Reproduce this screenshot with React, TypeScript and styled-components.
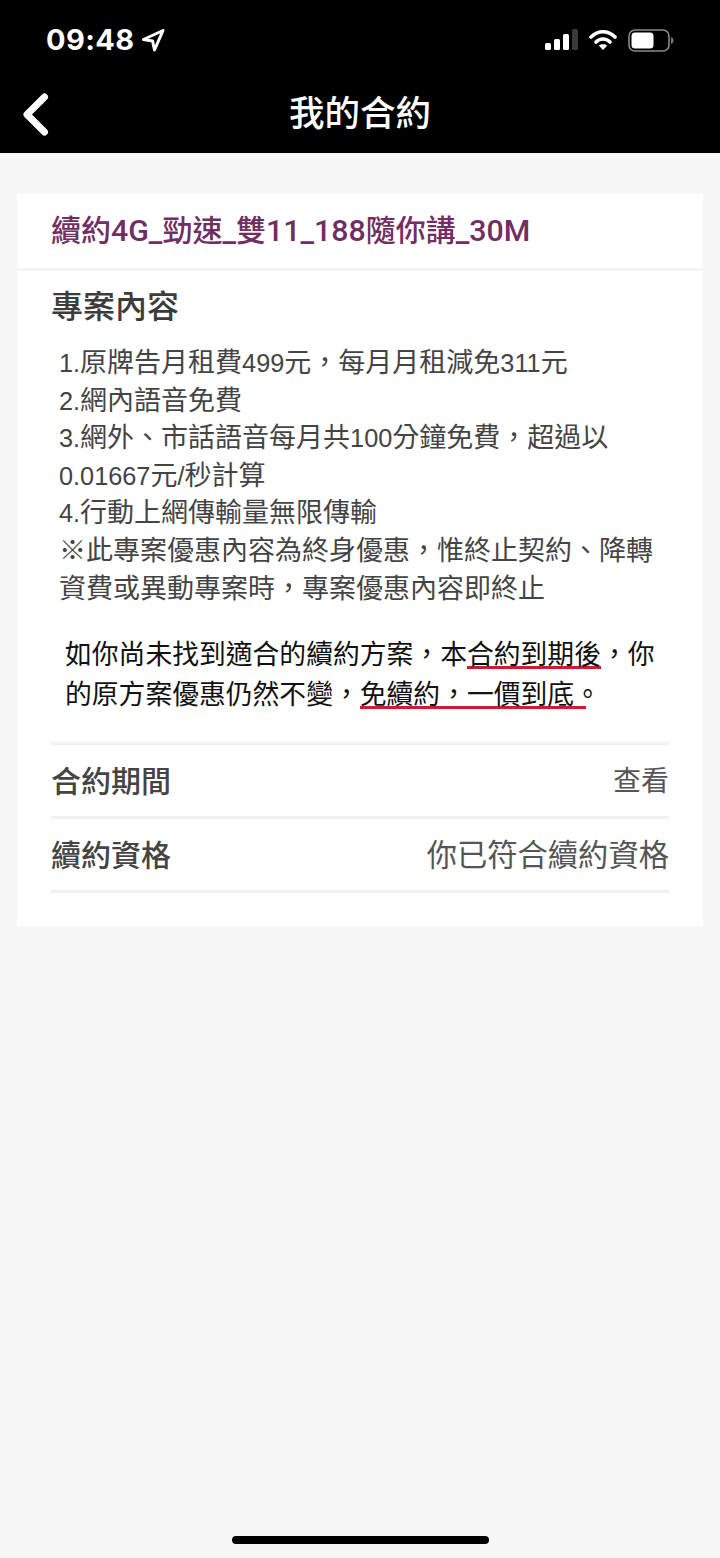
import React from "react";
import styled, { createGlobalStyle } from "styled-components";

const Global = createGlobalStyle`
  html, body { margin: 0; padding: 0; background: #f7f7f7; }
  * { box-sizing: border-box; }
  body { font-family: "Liberation Sans", "Noto Sans CJK TC", sans-serif; }
`;
const Page = styled.div`
  width: 720px; height: 1558px; display: flex; flex-direction: column; background: #f7f7f7; overflow: hidden;
`;
const Header = styled.header`
  height: 153px; flex: none; background: #000; color: #fff; display: flex; flex-direction: column;
`;
const StatusBar = styled.div`
  height: 76px; display: flex; align-items: flex-start; justify-content: space-between; padding: 24px 46px 0 46px;
`;
const Clock = styled.div`
  display: flex; align-items: center; gap: 6px; font: 700 29px/32px Inter, sans-serif; letter-spacing: 0.4px;
`;
const StatusIcons = styled.div`
  display: flex; align-items: center; gap: 11px; height: 32px;
`;
const NavBar = styled.div`
  position: relative; height: 77px; display: flex; justify-content: center;
`;
const NavTitle = styled.h1`
  margin: 0; font-size: 35.5px; line-height: 76px; font-weight: 500;
`;
const Back = styled.svg`
  position: absolute; left: 22px; top: 17px;
`;
const Card = styled.main`
  margin: 41px 17px 0; background: #fff; padding-bottom: 33px;
`;
const PlanTitle = styled.h2`
  margin: 0; height: 77px; padding-left: 34px; font-size: 30px; line-height: 74px; font-weight: 500; color: #722d63;
  border-bottom: 3px solid #f4f4f4;
`;
const PlanLatin = styled.span`
  font-family: Roboto, sans-serif; font-size: 30.3px; font-weight: 500;
`;
const Body = styled.div`
  padding: 0 34px;
`;
const SectionTitle = styled.h3`
  margin: 0; padding-top: 14px; font-size: 32px; line-height: 44px; font-weight: 500; color: #3c3c3c;
`;
const List = styled.div`
  margin-top: 16px; padding-left: 8px; font-size: 27px; line-height: 37.6px; color: #444;
`;
const Num = styled.span`
  font-size: 25.3px;
`;
const Notice = styled.p`
  margin: 27px 0 0; padding: 0 0 0 14px; font-size: 26.8px; line-height: 40px; color: #111; white-space: nowrap;
`;
const Mark = styled.span<{ $extra?: number }>`
  background: linear-gradient(#c8202f, #c8202f) no-repeat 0 calc(100% - 1px) / 100% 3px;
  padding-right: ${(p) => p.$extra ?? 0}px;
  margin-right: ${(p) => -(p.$extra ?? 0)}px;
`;
const Rows = styled.div`
  margin-top: 27px; border-top: 3px solid #f1f1f1;
`;
const Row = styled.div`
  height: 74px; padding-bottom: 4px; display: flex; align-items: center; justify-content: space-between; border-bottom: 3px solid #f1f1f1;
`;
const RowLabel = styled.span`
  font-size: 30px; font-weight: 500; color: #444;
`;
const RowValue = styled.span<{ $size: number }>`
  font-size: ${(p) => p.$size}px; color: #555;
`;
const HomeBar = styled.div`
  width: 257px; height: 8px; border-radius: 4px; background: #000; margin: auto auto 14px; flex: none;
`;

export default function App() {
  return (
    <Page>
      <Global />
      <Header>
        <StatusBar>
          <Clock>
            09:48
            <svg width="24" height="24" viewBox="0 0 24 24">
              <path d="M22 2.5 L2.5 11.5 L11.6 13 L13.5 22 Z" fill="none" stroke="#fff" strokeWidth="3" strokeLinejoin="round" />
            </svg>
          </Clock>
          <StatusIcons>
            <svg width="33" height="22" viewBox="0 0 33 22">
              <rect x="0" y="14" width="6" height="7" rx="1.5" fill="#fff" />
              <rect x="9" y="10" width="6" height="11" rx="1.5" fill="#fff" />
              <rect x="18" y="5" width="6" height="16" rx="1.5" fill="#fff" />
              <rect x="27" y="0" width="6" height="21" rx="1.5" fill="#3a3a3a" />
            </svg>
            <svg width="28" height="22" viewBox="0 0 28 22">
              <path d="M2 8 C9 1 19 1 26 8" fill="none" stroke="#fff" strokeWidth="3.6" strokeLinecap="round" />
              <path d="M7 13 C11 9 17 9 21 13" fill="none" stroke="#fff" strokeWidth="3.6" strokeLinecap="round" />
              <path d="M14 21 L9.8 16.6 C12 14.8 16 14.8 18.2 16.6 Z" fill="#fff" />
            </svg>
            <svg width="46" height="23" viewBox="0 0 46 23">
              <rect x="1" y="1" width="40" height="21" rx="6" fill="none" stroke="#8a8a8a" strokeWidth="1.6" />
              <rect x="3.5" y="3.5" width="22" height="16" rx="3.5" fill="#fff" />
              <path d="M43 8 C45 9 45.5 10 45.5 11.5 C45.5 13 45 14 43 15 Z" fill="#777" />
            </svg>
          </StatusIcons>
        </StatusBar>
        <NavBar>
          <Back width="28" height="44" viewBox="0 0 28 44">
            <path d="M22.5 4 L5 21.5 L22.5 39" fill="none" stroke="#fff" strokeWidth="7" strokeLinecap="round" strokeLinejoin="round" />
          </Back>
          <NavTitle>我的合約</NavTitle>
        </NavBar>
      </Header>
      <Card>
        <PlanTitle>續約<PlanLatin>4G_</PlanLatin>勁速<PlanLatin>_</PlanLatin>雙<PlanLatin>11_188</PlanLatin>隨你講<PlanLatin>_30M</PlanLatin></PlanTitle>
        <Body>
          <SectionTitle>專案內容</SectionTitle>
          <List>
            <Num>1.</Num>原牌告月租費<Num>499</Num>元，每月月租減免<Num>311</Num>元<br />
            <Num>2.</Num>網內語音免費<br />
            <Num>3.</Num>網外、市話語音每月共<Num>100</Num>分鐘免費，超過以<br />
            <Num>0.01667</Num>元<Num>/</Num>秒計算<br />
            <Num>4.</Num>行動上網傳輸量無限傳輸<br />
            ※此專案優惠內容為終身優惠，惟終止契約、降轉<br />
            資費或異動專案時，專案優惠內容即終止
          </List>
          <Notice>
            如你尚未找到適合的續約方案，本<Mark>合約到期後</Mark>，你<br />
            的原方案優惠仍然不變，<Mark $extra={12}>免續約，一價到底</Mark>。
          </Notice>
          <Rows>
            <Row>
              <RowLabel>合約期間</RowLabel>
              <RowValue $size={28}>查看</RowValue>
            </Row>
            <Row>
              <RowLabel>續約資格</RowLabel>
              <RowValue $size={30.3}>你已符合續約資格</RowValue>
            </Row>
          </Rows>
        </Body>
      </Card>
      <HomeBar />
    </Page>
  );
}
